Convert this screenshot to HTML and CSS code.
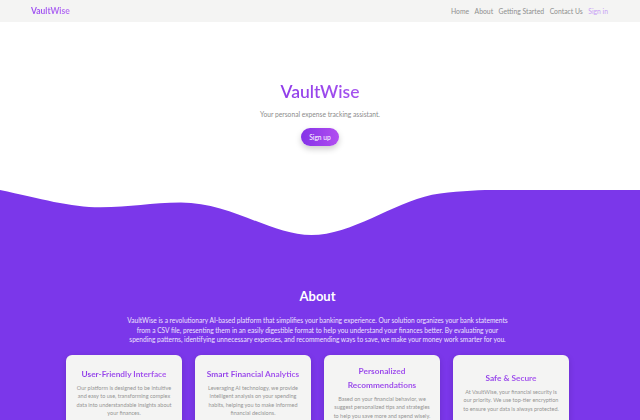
FILE: index.html
```
<!DOCTYPE html>
<html lang="en">
<head>
<meta charset="utf-8">
<title>VaultWise</title>
<link rel="stylesheet" href="styles.css">
</head>
<body>
<nav class="nav">
  <a class="brand" href="#">VaultWise</a>
  <ul class="links">
    <li><a href="#">Home</a></li>
    <li><a href="#">About</a></li>
    <li><a href="#">Getting Started</a></li>
    <li><a href="#">Contact Us</a></li>
    <li><a class="signin" href="#">Sign in</a></li>
  </ul>
</nav>
<header class="hero">
  <h1 class="hero-title">VaultWise</h1>
  <p class="hero-sub">Your personal expense tracking assistant.</p>
  <a class="btn" href="#">Sign up</a>
</header>
<svg class="wave" viewBox="0 0 637 50" preserveAspectRatio="none">
  <path d="M0 0 C40 9 70 18 100 18 C130 18 150 13 180 13 C230 13 270 47 310 47 C350 47 390 14 430 5 C465 -1 495 0 520 0 L637 0 L637 50 L0 50 Z" fill="#7b37ea"/>
</svg>
<section class="about">
  <h2 class="about-title">About</h2>
  <p class="about-text">VaultWise is a revolutionary AI-based platform that simplifies your banking experience. Our solution organizes your bank statements from a CSV file, presenting them in an easily digestible format to help you understand your finances better. By evaluating your spending patterns, identifying unnecessary expenses, and recommending ways to save, we make your money work smarter for you.</p>
  <div class="cards">
    <div class="card">
      <h3>User-Friendly Interface</h3>
      <p>Our platform is designed to be intuitive and easy to use, transforming complex data into understandable insights about your finances.</p>
    </div>
    <div class="card">
      <h3>Smart Financial Analytics</h3>
      <p>Leveraging AI technology, we provide intelligent analysis on your spending habits, helping you to make informed financial decisions.</p>
    </div>
    <div class="card">
      <h3>Personalized Recommendations</h3>
      <p>Based on your financial behavior, we suggest personalized tips and strategies to help you save more and spend wisely.</p>
    </div>
    <div class="card">
      <h3>Safe &amp; Secure</h3>
      <p>At VaultWise, your financial security is our priority. We use top-tier encryption to ensure your data is always protected.</p>
    </div>
  </div>
</section>
</body>
</html>
```
FILE: styles.css
```
html { overflow-y: scroll; }
::-webkit-scrollbar { width: 3px; background: #e6e6e6; }
::-webkit-scrollbar-thumb { background: #9a9a9a; }
body {
  margin: 0;
  font-family: Lato, "Open Sans", sans-serif;
  background: #7b37ea;
}
a { text-decoration: none; }
.nav {
  height: 22px;
  background: #f4f4f3;
  display: flex;
  align-items: center;
  justify-content: space-between;
  padding: 0 32px 0 31px;
}
.brand {
  font-size: 8.5px;
  font-weight: 700;
  background: linear-gradient(90deg, #9b4cf0, #b46ef3);
  -webkit-background-clip: text;
  color: transparent;
}
.links {
  list-style: none;
  margin: 0;
  padding: 0;
  display: flex;
  gap: 5.5px;
  font-size: 6.8px;
}
.links a { color: #8f8f8f; }
.links a.signin { color: #c89ef5; }
.hero {
  background: #fff;
  height: 168px;
  display: flex;
  flex-direction: column;
  align-items: center;
  padding-top: 60px;
  box-sizing: border-box;
}
.hero-title {
  margin: 0;
  font-size: 17.5px;
  font-weight: 600;
  line-height: 20px;
  background: linear-gradient(90deg, #8f3ce9, #a553ee);
  -webkit-background-clip: text;
  color: transparent;
}
.hero-sub {
  margin: 8px 0 0;
  font-size: 6.7px;
  color: #8c8c8c;
  line-height: 8px;
}
.btn {
  margin-top: 10px;
  width: 38px;
  height: 18px;
  border-radius: 9px;
  background: linear-gradient(90deg, #8433e8, #b24ef0);
  color: #fff;
  font-size: 6.7px;
  display: flex;
  align-items: center;
  justify-content: center;
  box-shadow: 0 3px 6px rgba(0,0,0,0.2);
}
.wave {
  display: block;
  width: 100%;
  height: 48px;
  background: #fff;
}
.about {
  padding: 50px 5px 0 0;
  display: flex;
  flex-direction: column;
  align-items: center;
}
.about-title {
  margin: 0;
  font-size: 13px;
  line-height: 16px;
  color: #fff;
  font-weight: 700;
}
.about-text {
  margin: 12px 0 0;
  width: 384px;
  text-align: center;
  font-size: 6.6px;
  line-height: 9.7px;
  color: #ece2fc;
}
.cards {
  margin-top: 10px;
  display: grid;
  grid-template-columns: repeat(4, 116px);
  gap: 13px;
}
.card {
  background: #f4f4f3;
  border-radius: 6px;
  height: 74px;
  padding: 0 8px;
  display: flex;
  flex-direction: column;
  justify-content: center;
  align-items: center;
  text-align: center;
  box-shadow: 0 2px 6px rgba(0,0,0,0.15);
}
.card h3 {
  margin: 0;
  font-size: 8.3px;
  line-height: 14px;
  font-weight: 700;
  background: linear-gradient(90deg, #8f3ce9, #a553ee);
  -webkit-background-clip: text;
  color: transparent;
}
.card p {
  margin: 3px 0 0;
  font-size: 5.5px;
  line-height: 8.5px;
  color: #949494;
}
```
